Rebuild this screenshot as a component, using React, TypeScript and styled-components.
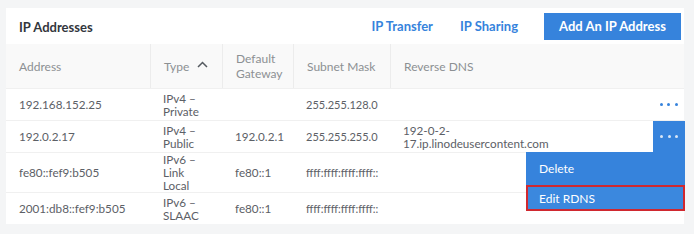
import React from "react";
import styled, { createGlobalStyle } from "styled-components";

const GlobalStyle = createGlobalStyle`
  html, body {
    margin: 0;
    padding: 0;
    background: #f4f5f6;
  }
  body {
    font-family: Lato, "Open Sans", sans-serif;
    -webkit-font-smoothing: antialiased;
  }
`;

const blue = "#3683dc";

const rows = [
  { address: "192.168.152.25", type: "IPv4 – Private", gateway: "", mask: "255.255.128.0", rdns: "" },
  { address: "192.0.2.17", type: "IPv4 – Public", gateway: "192.0.2.1", mask: "255.255.255.0", rdns: "192-0-2-17.ip.linodeusercontent.com", open: true },
  { address: "fe80::fef9:b505", type: "IPv6 – Link Local", gateway: "fe80::1", mask: "ffff:ffff:ffff:ffff::", rdns: "" },
  { address: "2001:db8::fef9:b505", type: "IPv6 – SLAAC", gateway: "fe80::1", mask: "ffff:ffff:ffff:ffff::", rdns: "" },
];

export default function App() {
  return (
    <>
      <GlobalStyle />
      <Page>
        <Card>
          <TopBar>
            <Title>IP Addresses</Title>
            <Actions>
              <LinkButton>IP Transfer</LinkButton>
              <LinkButton>IP Sharing</LinkButton>
              <PrimaryButton>Add An IP Address</PrimaryButton>
            </Actions>
          </TopBar>
          <HeadRow>
            <HeadCell>Address</HeadCell>
            <HeadCell divider>
              Type
              <Caret width="11" height="7" viewBox="0 0 11 7">
                <path d="M1 6 L5.5 1.5 L10 6" fill="none" stroke="#555a60" strokeWidth="1.5" />
              </Caret>
            </HeadCell>
            <HeadCell divider>
              Default
              <br />
              Gateway
            </HeadCell>
            <HeadCell divider>Subnet Mask</HeadCell>
            <HeadCell divider>Reverse DNS</HeadCell>
            <HeadCell />
          </HeadRow>
          {rows.map((r) => (
            <Row key={r.address}>
              <Cell>{r.address}</Cell>
              <TypeCell>{r.type}</TypeCell>
              <Cell>{r.gateway}</Cell>
              <MaskCell>{r.mask}</MaskCell>
              <RdnsCell>{r.rdns}</RdnsCell>
              <MenuCell>
                <MoreButton active={!!r.open}>
                  <Dot />
                  <Dot />
                  <Dot />
                </MoreButton>
                {r.open && (
                  <Menu>
                    <MenuItem>Delete</MenuItem>
                    <MenuItem selected>Edit RDNS</MenuItem>
                  </Menu>
                )}
              </MenuCell>
            </Row>
          ))}
        </Card>
      </Page>
    </>
  );
}

const Page = styled.div`
  padding: 8px 10px 10px 6px;
`;

const Card = styled.div`
  background: #fff;
  width: 678px;
`;

const TopBar = styled.div`
  height: 36px;
  display: flex;
  align-items: center;
  justify-content: space-between;
  padding-left: 13px;
  padding-right: 3px;
`;

const Title = styled.h2`
  margin: 0;
  font-size: 13px;
  font-weight: 700;
  color: #32363c;
  padding-top: 1px;
`;

const Actions = styled.div`
  display: flex;
  align-items: center;
`;

const LinkButton = styled.button`
  background: none;
  border: none;
  font-family: inherit;
  font-size: 13px;
  font-weight: 700;
  color: ${blue};
  padding: 0;
  margin-right: 26px;
  &:first-child {
    margin-right: 27px;
  }
`;

const PrimaryButton = styled.button`
  background: ${blue};
  border: none;
  color: #fff;
  font-family: inherit;
  font-size: 13px;
  font-weight: 700;
  width: 137px;
  height: 27px;
  padding: 0;
`;

const columns = "144px 72px 71px 97px 1fr 31px";

const HeadRow = styled.div`
  display: grid;
  grid-template-columns: ${columns};
  height: 44px;
  background: #f9f9f9;
`;

const HeadCell = styled.div<{ divider?: boolean }>`
  display: flex;
  align-items: center;
  padding-left: 13px;
  font-size: 12px;
  line-height: 15px;
  color: #8c9093;
  border-left: ${(p) => (p.divider ? "1px solid #ececec" : "none")};
`;

const Caret = styled.svg`
  margin-left: 8px;
  margin-top: -3px;
`;

const Row = styled.div`
  display: grid;
  grid-template-columns: ${columns};
  min-height: 31px;
  border-top: 1px solid #f0f0f0;
  font-size: 11.7px;
  line-height: 13px;
  color: #5c6066;
  &:first-of-type {
    border-top: none;
  }
`;

const Cell = styled.div`
  display: flex;
  align-items: center;
  padding-left: 13px;
`;

const TypeCell = styled(Cell)`
  padding-right: 10px;
`;

const MaskCell = styled(Cell)`
  font-size: 11px;
`;

const RdnsCell = styled(Cell)`
  max-width: 150px;
`;

const MenuCell = styled.div`
  position: relative;
  display: flex;
`;

const MoreButton = styled.div<{ active: boolean }>`
  flex: 1;
  display: flex;
  align-items: center;
  justify-content: center;
  gap: 4.5px;
  background: ${(p) => (p.active ? blue : "transparent")};
  color: ${(p) => (p.active ? "#d8e6f7" : blue)};
  margin-right: ${(p) => (p.active ? "-1px" : "0")};
`;

const Dot = styled.span`
  width: 3px;
  height: 3px;
  border-radius: 50%;
  background: currentColor;
`;

const Menu = styled.div`
  position: absolute;
  top: 100%;
  right: -1px;
  width: 159px;
  background: ${blue};
  z-index: 2;
`;

const MenuItem = styled.div<{ selected?: boolean }>`
  height: ${(p) => (p.selected ? "26px" : "33px")};
  display: flex;
  align-items: center;
  color: #fff;
  font-size: 12px;
  box-sizing: border-box;
  border: ${(p) => (p.selected ? "2px solid #d0282f" : "none")};
  background: ${(p) => (p.selected ? "#3b88de" : blue)};
  padding-left: ${(p) => (p.selected ? "11px" : "13px")};
`;
